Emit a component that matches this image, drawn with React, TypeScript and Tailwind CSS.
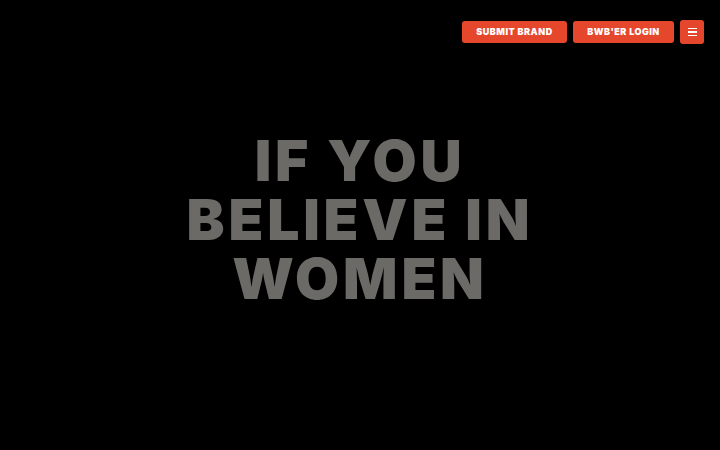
export default function App() {
  return (
    <div className="w-[720px] h-[450px] bg-black flex flex-col overflow-hidden" style={{ fontFamily: '"Inter", "Liberation Sans", sans-serif' }}>
      {/* Header */}
      <header className="flex justify-end items-center gap-[6px] pt-[20px] pr-[16px]">
        <button className="h-[22px] w-[105px] rounded-[3px] bg-[#e5472c] text-white text-[9px] font-black tracking-[0.5px] flex items-center justify-center">
          SUBMIT BRAND
        </button>
        <button className="h-[22px] w-[101px] rounded-[3px] bg-[#e5472c] text-white text-[9px] font-black tracking-[0.5px] flex items-center justify-center">
          BWB'ER LOGIN
        </button>
        <button className="h-[24px] w-[24px] rounded-[3px] bg-[#e5472c] flex flex-col items-center justify-center gap-[2px]">
          <span className="block w-[9px] h-[1.5px] bg-white" />
          <span className="block w-[9px] h-[1.5px] bg-white" />
          <span className="block w-[9px] h-[1.5px] bg-white" />
        </button>
      </header>

      {/* Hero */}
      <main className="flex-1 flex items-start justify-center pt-[87px]">
        <h1 className="flex flex-col items-center text-[#6b6a66] text-[57px] leading-[59px] font-black tracking-[3.8px]">
          <span>IF YOU</span>
          <span>BELIEVE IN</span>
          <span>WOMEN</span>
        </h1>
      </main>
    </div>
  );
}
